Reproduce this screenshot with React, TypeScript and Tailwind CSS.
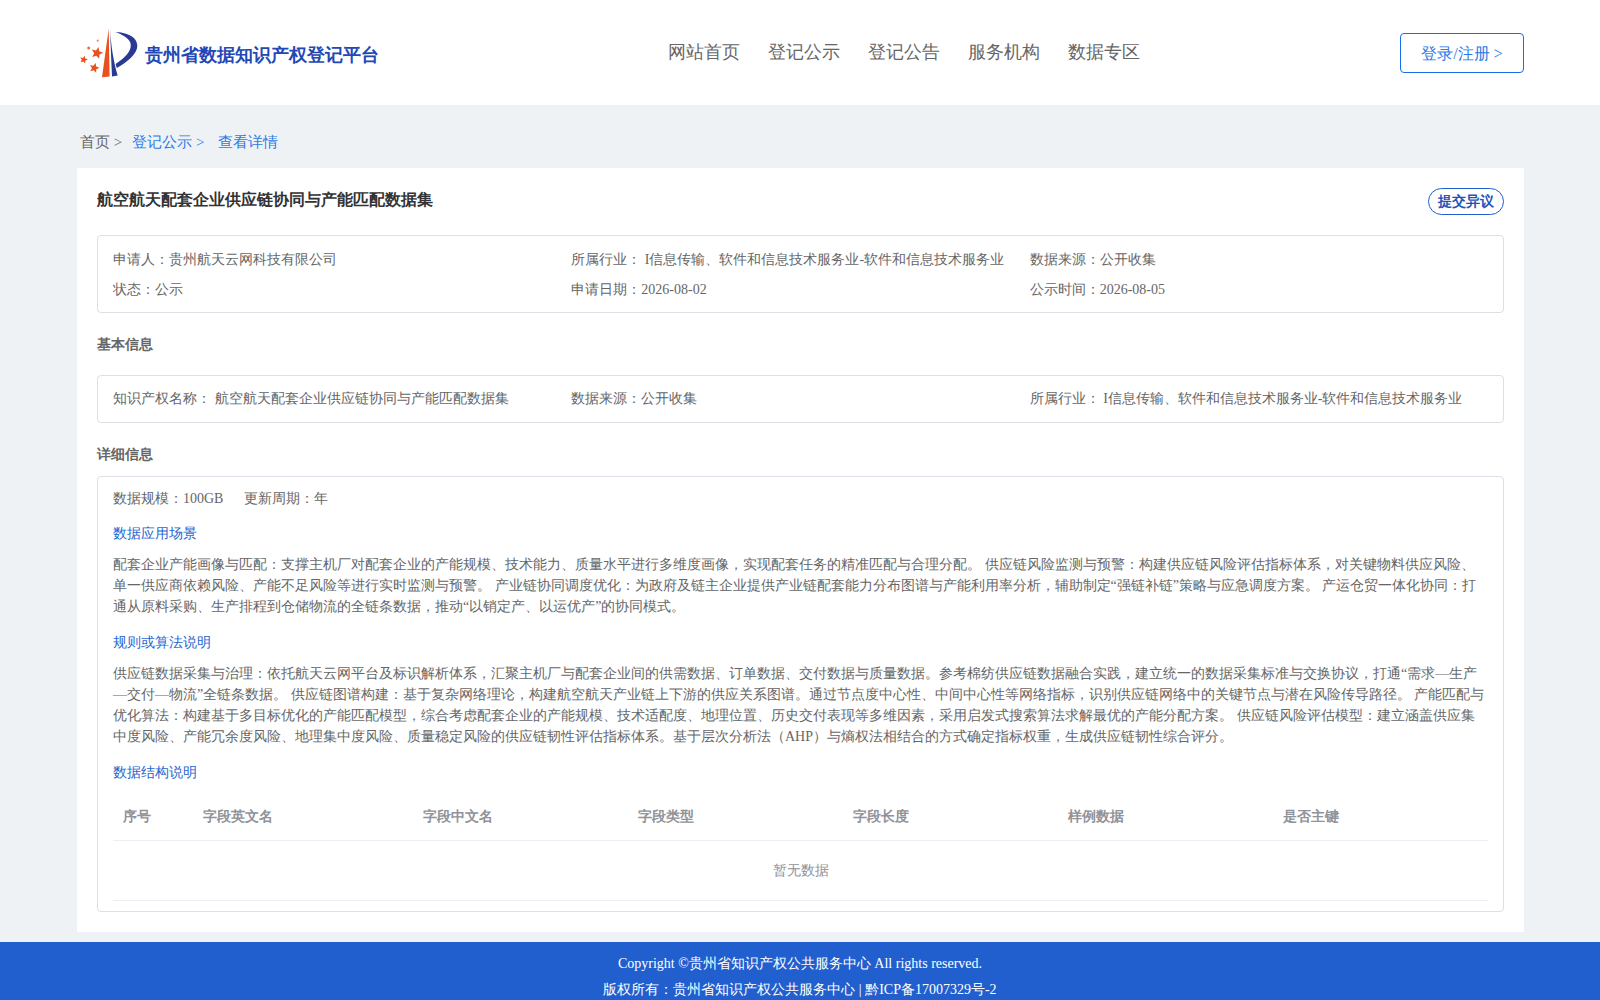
import React from "react";

const star = (cx: number, cy: number, r: number, rot: number) => {
  const pts: string[] = [];
  for (let i = 0; i < 10; i++) {
    const a = ((-90 + rot + i * 36) * Math.PI) / 180;
    const rad = i % 2 === 0 ? r : r * 0.45;
    pts.push(`${(cx + rad * Math.cos(a)).toFixed(2)},${(cy + rad * Math.sin(a)).toFixed(2)}`);
  }
  return pts.join(" ");
};

const Logo = () => (
  <svg width="60" height="52" viewBox="0 0 60 52" className="shrink-0">
    <path d="M22 50.3 L28.7 1.7 L29.6 49.6 Z" fill="#e8501f" />
    <path d="M30 1.7 C31 18 33.5 35 37.7 48.4 L32 49.6 C31.3 33 30.6 17 30 1.7 Z" fill="#2a3a94" />
    <path d="M35 5 C46 5.5 57 9 57.3 18.5 C57.5 27 47 35 36.8 41 L35.6 37 C43 32 51 25.5 50.8 18 C50.6 12 43 7.5 35 5 Z" fill="#2a3a94" />
    <polygon points={star(17, 26, 6.2, 15)} fill="#e8501f" />
    <polygon points={star(3.7, 32.7, 4.2, 15)} fill="#e8501f" />
    <polygon points={star(14.3, 41, 5.2, 15)} fill="#e8501f" />
    <circle cx="8.7" cy="21" r="1.5" fill="#ec6a3c" />
    <circle cx="17.7" cy="13.7" r="1.1" fill="#f0906a" />
  </svg>
);

const navItems = ["网站首页", "登记公示", "登记公告", "服务机构", "数据专区"];
const cols = [
  { t: "序号", w: "w-[80px]" },
  { t: "字段英文名", w: "w-[220px]" },
  { t: "字段中文名", w: "w-[215px]" },
  { t: "字段类型", w: "w-[215px]" },
  { t: "字段长度", w: "w-[215px]" },
  { t: "样例数据", w: "w-[215px]" },
  { t: "是否主键", w: "w-[215px]" },
];

export default function App() {
  return (
    <div className="min-h-screen bg-[#eef2f5] text-[14px] text-[#666] font-['Liberation_Serif',serif]">
      <header className="h-[105px] bg-white pl-[80px] pr-[76px] flex items-start">
        <div className="w-[300px] flex items-center pt-[27px]">
          <Logo />
          <span className="ml-[5px] mt-[4px] text-[18px] leading-[28px] font-bold text-[#2348b5] whitespace-nowrap">贵州省数据知识产权登记平台</span>
        </div>
        <nav className="ml-[288px] flex gap-[28px] pt-[37px]">
          {navItems.map((n) => (
            <span key={n} className="text-[18px] leading-[30px] text-[#666]">{n}</span>
          ))}
        </nav>
        <button className="ml-auto mt-[33px] w-[124px] h-[40px] pt-[2px] border border-[#1a6fe8] rounded-[4px] text-[16px] text-[#2b7ae8]">登录/注册 &gt;</button>
      </header>

      <div className="pl-[77px] pr-[76px]">
        <div className="h-[63px] pl-[3px] pt-[25px] leading-[24px] text-[15px] flex">
          <span className="text-[#666]">首页 &gt;</span>
          <span className="ml-[10px] text-[#2b7ae8]">登记公示 &gt;</span>
          <span className="ml-[14px] text-[#2b7ae8]">查看详情</span>
        </div>

        <main className="bg-white px-[20px] pt-[20px] pb-[20px] h-[764px]">
          <div className="flex justify-between items-start">
            <h1 className="text-[16px] leading-[24px] font-bold text-[#333]">航空航天配套企业供应链协同与产能匹配数据集</h1>
            <span className="h-[27px] w-[76px] flex items-center justify-center border border-[#1f5fcc] rounded-[14px] font-bold text-[#1f54b8]">提交异议</span>
          </div>

          <section className="mt-[20px] h-[78px] border border-[#dcdfe6] rounded-[4px] px-[15px] pt-[8px] grid grid-cols-3 grid-rows-[30px_30px] items-center">
            <div>申请人：贵州航天云网科技有限公司</div>
            <div>所属行业： I信息传输、软件和信息技术服务业-软件和信息技术服务业</div>
            <div>数据来源：公开收集</div>
            <div>状态：公示</div>
            <div>申请日期：2026-08-02</div>
            <div>公示时间：2026-08-05</div>
          </section>

          <h2 className="mt-[20px] text-[14px] leading-[24px] font-bold text-[#666]">基本信息</h2>

          <section className="mt-[18px] h-[48px] pb-[2px] border border-[#dcdfe6] rounded-[4px] px-[15px] grid grid-cols-3 items-center">
            <div>知识产权名称： 航空航天配套企业供应链协同与产能匹配数据集</div>
            <div>数据来源：公开收集</div>
            <div>所属行业： I信息传输、软件和信息技术服务业-软件和信息技术服务业</div>
          </section>

          <h2 className="mt-[20px] text-[14px] leading-[24px] font-bold text-[#666]">详细信息</h2>

          <section className="mt-[9px] h-[436px] border border-[#dcdfe6] rounded-[4px] px-[15px] pt-[11px]">
            <div className="flex gap-[21px] leading-[21px]">
              <span>数据规模：100GB</span>
              <span>更新周期：年</span>
            </div>
            <h3 className="mt-[14px] leading-[21px] text-[#1f66d0]">数据应用场景</h3>
            <p className="mt-[10px] leading-[21px]">配套企业产能画像与匹配：支撑主机厂对配套企业的产能规模、技术能力、质量水平进行多维度画像，实现配套任务的精准匹配与合理分配。 供应链风险监测与预警：构建供应链风险评估指标体系，对关键物料供应风险、单一供应商依赖风险、产能不足风险等进行实时监测与预警。 产业链协同调度优化：为政府及链主企业提供产业链配套能力分布图谱与产能利用率分析，辅助制定“强链补链”策略与应急调度方案。 产运仓贸一体化协同：打通从原料采购、生产排程到仓储物流的全链条数据，推动“以销定产、以运优产”的协同模式。</p>
            <h3 className="mt-[15px] leading-[21px] text-[#1f66d0]">规则或算法说明</h3>
            <p className="mt-[10px] leading-[21px]">供应链数据采集与治理：依托航天云网平台及标识解析体系，汇聚主机厂与配套企业间的供需数据、订单数据、交付数据与质量数据。参考棉纺供应链数据融合实践，建立统一的数据采集标准与交换协议，打通“需求—生产—交付—物流”全链条数据。 供应链图谱构建：基于复杂网络理论，构建航空航天产业链上下游的供应关系图谱。通过节点度中心性、中间中心性等网络指标，识别供应链网络中的关键节点与潜在风险传导路径。 产能匹配与优化算法：构建基于多目标优化的产能匹配模型，综合考虑配套企业的产能规模、技术适配度、地理位置、历史交付表现等多维因素，采用启发式搜索算法求解最优的产能分配方案。 供应链风险评估模型：建立涵盖供应集中度风险、产能冗余度风险、地理集中度风险、质量稳定风险的供应链韧性评估指标体系。基于层次分析法（AHP）与熵权法相结合的方式确定指标权重，生成供应链韧性综合评分。</p>
            <h3 className="mt-[15px] leading-[21px] text-[#1f66d0]">数据结构说明</h3>
            <table className="mt-[11px] w-full table-fixed border-collapse">
              <thead>
                <tr className="h-[46px] border-b border-[#ebeef5]">
                  {cols.map((c) => (
                    <th key={c.t} className={`${c.w} px-[10px] text-left font-bold text-[#909399]`}>{c.t}</th>
                  ))}
                </tr>
              </thead>
              <tbody>
                <tr className="h-[60px] border-b border-[#ebeef5]">
                  <td colSpan={7} className="text-center text-[#909399]">暂无数据</td>
                </tr>
              </tbody>
            </table>
          </section>
        </main>
      </div>

      <footer className="mt-[10px] bg-[#215fce] text-white text-center pt-[9px] pb-[9px]">
        <div className="leading-[26px]">Copyright ©贵州省知识产权公共服务中心 All rights reserved.</div>
        <div className="leading-[26px]">版权所有：贵州省知识产权公共服务中心 | 黔ICP备17007329号-2</div>
      </footer>
    </div>
  );
}
